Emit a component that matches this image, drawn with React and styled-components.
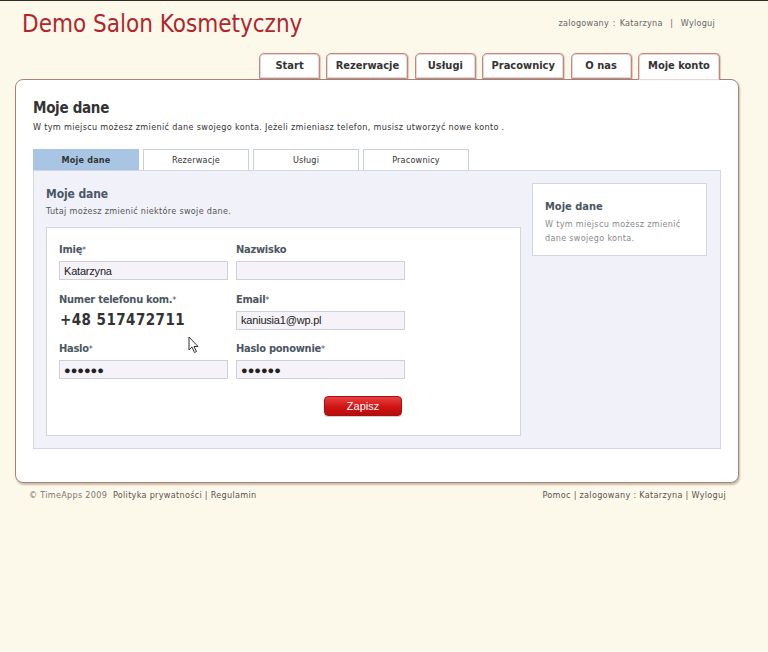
import React from "react";
import styled, { createGlobalStyle } from "styled-components";

const Global = createGlobalStyle`
  html, body { margin: 0; padding: 0; }
  body {
    background: #fdf9ea;
    font-family: "DejaVu Sans Condensed", "DejaVu Sans", sans-serif;
    font-stretch: condensed;
    color: #333;
  }
`;

const Page = styled.div`
  width: 768px;
  min-height: 652px;
  border-top: 1px solid #2c2a26;
  box-sizing: border-box;
  position: relative;
`;

const Header = styled.header`
  display: flex;
  justify-content: space-between;
  align-items: flex-start;
  padding: 9px 53px 0 22px;
  height: 43px;
`;

const Title = styled.h1`
  margin: 0;
  font-weight: normal;
  font-size: 24px;
  color: #b0262c;
`;

const TopLinks = styled.div`
  font-size: 9px;
  color: #666;
  margin-top: 8px;
  letter-spacing: 0.25px;
  word-spacing: 1px;
`;

const Nav = styled.nav`
  display: flex;
  justify-content: flex-end;
  padding-right: 48px;
  gap: 6.4px;
  height: 26px;
  position: relative;
  z-index: 2;
`;

const Tab = styled.div`
  width: ${(p) => p.$w}px;
  box-sizing: border-box;
  height: ${(p) => (p.$active ? 27 : 26)}px;
  border: 1px solid #b98a86;
  border-bottom: ${(p) => (p.$active ? "none" : "1px solid #b98a86")};
  border-radius: 5px 5px 0 0;
  box-shadow: inset 0 0 0 1px #ecd6d2, 1px 0 1px rgba(120, 70, 60, 0.25);
  background: #fff;
  font-weight: bold;
  font-size: 11px;
  color: #333;
  display: flex;
  justify-content: center;
  padding-top: 5px;
`;

const Panel = styled.main`
  margin: 0 29px 0 15px;
  background: #fff;
  border: 1px solid #a98274;
  border-radius: 8px;
  box-shadow: 1px 2px 2px rgba(110, 70, 50, 0.35);
  padding: 19px 17px 33px 17px;
  position: relative;
  z-index: 1;
`;

const H2 = styled.h2`
  margin: 0;
  font-size: 15px;
  font-weight: bold;
  color: #333;
  letter-spacing: -0.3px;
`;

const Lead = styled.p`
  margin: 5px 0 0;
  font-size: 9px;
  letter-spacing: 0.33px;
  color: #333;
`;

const SubTabs = styled.div`
  display: flex;
  gap: 4px;
  margin-top: 17px;
`;

const SubTab = styled.div`
  width: 106px;
  height: 21px;
  box-sizing: border-box;
  border: 1px solid ${(p) => (p.$active ? "#a9c5e4" : "#c9cfdc")};
  border-bottom: none;
  background: ${(p) => (p.$active ? "#a9c5e4" : "#fff")};
  font-size: 9px;
  letter-spacing: 0.2px;
  font-weight: ${(p) => (p.$active ? "bold" : "normal")};
  color: #333;
  display: flex;
  align-items: center;
  justify-content: center;
`;

const Content = styled.section`
  background: #f1f1f9;
  border: 1px solid #d4d6e6;
  padding: 12px 13px 12px 12px;
  display: flex;
  justify-content: space-between;
  align-items: flex-start;
`;

const Left = styled.div`
  width: 475px;
`;

const H3 = styled.h3`
  margin: 4px 0 0;
  font-size: 12px;
  font-weight: bold;
  color: #4a5866;
  letter-spacing: -0.1px;
`;

const Note = styled.p`
  margin: 5px 0 0;
  font-size: 9px;
  letter-spacing: 0.3px;
  color: #555;
`;

const FormBox = styled.div`
  margin-top: 11px;
  background: #fff;
  border: 1px solid #d2d6e4;
  padding: 15px 12px 19px 12px;
  display: grid;
  grid-template-columns: 169px 169px;
  column-gap: 8px;
  row-gap: 12.5px;
`;

const Field = styled.div`
  display: flex;
  flex-direction: column;
  gap: 4px;
`;

const Label = styled.label`
  font-size: 11px;
  font-weight: bold;
  color: #4b5661;
  line-height: 14px;
  letter-spacing: -0.25px;
`;

const Star = styled.span`
  font-weight: normal;
  font-size: 9px;
  vertical-align: top;
`;

const Input = styled.div`
  height: 19px;
  box-sizing: border-box;
  border: 1px solid #cdd0dc;
  background: #f5f2f8;
  font-family: "Liberation Sans", Arial, sans-serif;
  font-stretch: normal;
  font-size: 11px;
  color: #222;
  padding: 0 4px;
  display: flex;
  align-items: center;
  letter-spacing: ${(p) => (p.$dots ? "0px" : "-0.2px")};
`;

const Phone = styled.div`
  font-size: 15px;
  font-weight: bold;
  color: #333;
  height: 19px;
  line-height: 19px;
  letter-spacing: 0.45px;
  padding-left: 1px;
`;

const ButtonRow = styled.div`
  grid-column: 2;
  padding-left: 88px;
  margin-top: 4px;
`;

const Button = styled.button`
  display: block;
  width: 78px;
  height: 20px;
  border: 1px solid #a51010;
  border-radius: 4px;
  background: linear-gradient(#e94040, #cf1414 55%, #b80c0c);
  box-shadow: 0 1px 1px rgba(0, 0, 0, 0.2);
  color: #fff;
  font-family: "Liberation Sans", Arial, sans-serif;
  font-stretch: normal;
  font-size: 11px;
  padding: 0;
`;

const SideBox = styled.aside`
  width: 175px;
  height: 73px;
  box-sizing: border-box;
  background: #fff;
  border: 1px solid #d2d6e4;
  padding: 16px 12px 0 12px;
`;

const SideTitle = styled.div`
  font-size: 11px;
  font-weight: bold;
  color: #4a5560;
`;

const SideText = styled.div`
  margin-top: 4px;
  font-size: 9px;
  line-height: 14px;
  letter-spacing: 0.3px;
  color: #8a8a8a;
`;

const Footer = styled.footer`
  display: flex;
  justify-content: space-between;
  padding: 7px 42px 0 29px;
  font-size: 9px;
  letter-spacing: 0.3px;
  color: #777;
`;

const Strong = styled.span`
  color: #555;
`;

const Cursor = styled.svg`
  position: absolute;
  left: 188px;
  top: 335px;
  z-index: 5;
`;

export default function App() {
  const tabs = [
    ["Start", 61],
    ["Rezerwacje", 82],
    ["Usługi", 61],
    ["Pracownicy", 82],
    ["O nas", 61],
    ["Moje konto", 82, true],
  ];
  return (
    <Page>
      <Global />
      <Header>
        <Title>Demo Salon Kosmetyczny</Title>
        <TopLinks>zalogowany : Katarzyna&nbsp; | &nbsp;Wyloguj</TopLinks>
      </Header>
      <Nav>
        {tabs.map(([t, w, a]) => (
          <Tab key={t} $w={w} $active={a}>
            {t}
          </Tab>
        ))}
      </Nav>
      <Panel>
        <H2>Moje dane</H2>
        <Lead>
          W tym miejscu możesz zmienić dane swojego konta. Jeżeli zmieniasz telefon, musisz utworzyć nowe konto .
        </Lead>
        <SubTabs>
          <SubTab $active>Moje dane</SubTab>
          <SubTab>Rezerwacje</SubTab>
          <SubTab>Usługi</SubTab>
          <SubTab>Pracownicy</SubTab>
        </SubTabs>
        <Content>
          <Left>
            <H3>Moje dane</H3>
            <Note>Tutaj możesz zmienić niektóre swoje dane.</Note>
            <FormBox>
              <Field>
                <Label>Imię<Star>*</Star></Label>
                <Input>Katarzyna</Input>
              </Field>
              <Field>
                <Label>Nazwisko</Label>
                <Input />
              </Field>
              <Field>
                <Label>Numer telefonu kom.<Star>*</Star></Label>
                <Phone>+48 517472711</Phone>
              </Field>
              <Field>
                <Label>Email<Star>*</Star></Label>
                <Input>kaniusia1@wp.pl</Input>
              </Field>
              <Field>
                <Label>Haslo<Star>*</Star></Label>
                <Input $dots>●●●●●●</Input>
              </Field>
              <Field>
                <Label>Haslo ponownie<Star>*</Star></Label>
                <Input $dots>●●●●●●</Input>
              </Field>
              <ButtonRow>
                <Button>Zapisz</Button>
              </ButtonRow>
            </FormBox>
          </Left>
          <SideBox>
            <SideTitle>Moje dane</SideTitle>
            <SideText>
              W tym miejscu możesz zmienić
              <br />
              dane swojego konta.
            </SideText>
          </SideBox>
        </Content>
      </Panel>
      <Footer>
        <span>
          © TimeApps 2009&nbsp; <Strong>Polityka prywatności | Regulamin</Strong>
        </span>
        <Strong>Pomoc | zalogowany : Katarzyna | Wyloguj</Strong>
      </Footer>
      <Cursor width="12" height="18" viewBox="0 0 12 18">
        <path d="M1 1 L1 14 L4 11 L6.5 16.5 L8.5 15.5 L6 10.5 L10 10.5 Z" fill="#fff" stroke="#333" strokeWidth="1" strokeLinejoin="round" />
      </Cursor>
    </Page>
  );
}
